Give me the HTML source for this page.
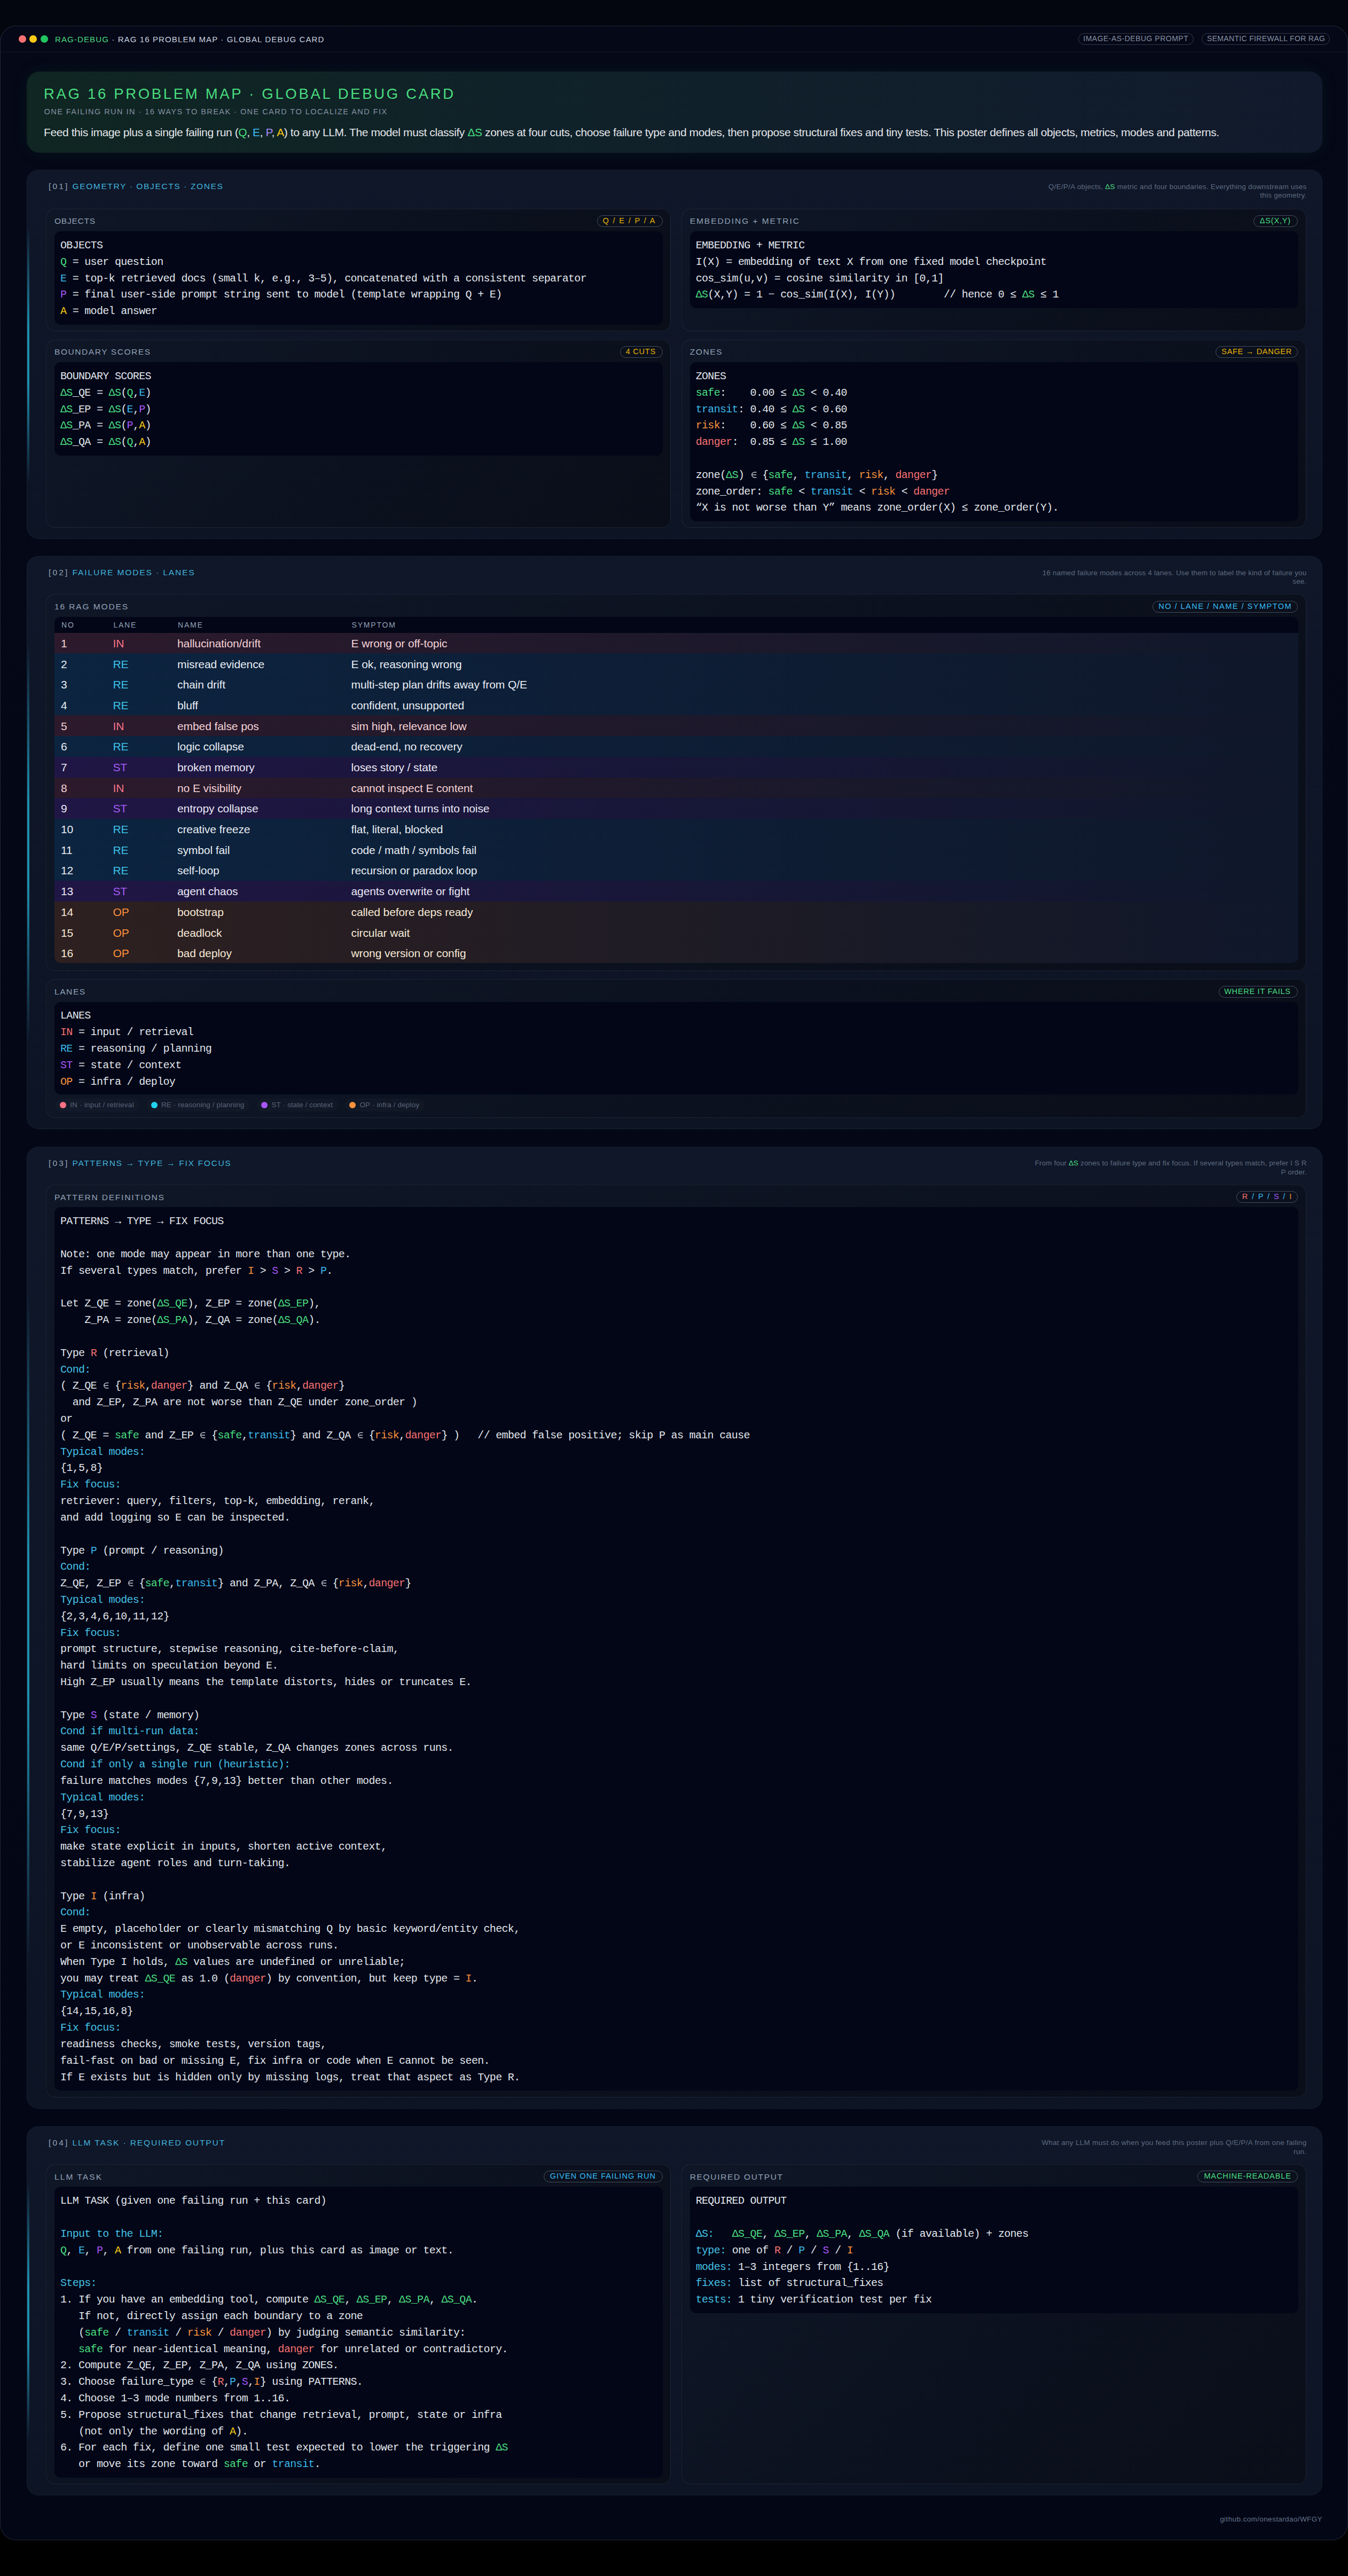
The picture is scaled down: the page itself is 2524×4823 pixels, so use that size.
<!DOCTYPE html><html><head><meta charset="utf-8"><title>RAG 16 Problem Map</title><style>
*{box-sizing:border-box;margin:0;padding:0}
html,body{width:2524px;height:4823px;overflow:hidden;background:#000}
body{position:relative;font-family:"Liberation Sans",sans-serif;color:#e5e7eb}
.abs{position:absolute;white-space:nowrap}
.bg{position:absolute;left:0;top:0;width:2524px;height:4823px;background:linear-gradient(180deg,#04060f 0px,#02030a 1500px,#000 4760px)}
.win{position:absolute;left:0;top:48px;width:2524px;height:4708px;border:1px solid rgba(148,163,184,.2);border-radius:30px;
 background:linear-gradient(180deg,#050817 0%,#040816 50%,#030615 100%);overflow:hidden}
.tbline{position:absolute;left:1px;right:1px;top:48px;height:1px;background:rgba(148,163,184,.1)}
.dot{position:absolute;width:14px;height:14px;border-radius:50%}
.tpill{position:absolute;height:22px;border:1.5px solid rgba(148,163,184,.32);border-radius:11px;color:#8591a4;font-size:14px;line-height:19px;white-space:nowrap}
.hero{position:absolute;left:50px;top:134px;width:2426px;height:152px;border-radius:24px;
 background:linear-gradient(90deg,#0f2622 0%,#10212a 45%,#111a2c 100%);
 box-shadow:0 0 36px rgba(34,197,94,.07)}
.sec{position:absolute;left:50px;width:2426px;border-radius:22px;background:linear-gradient(180deg,#0f1729 0%,#0e1527 60%,#0d1424 100%);
 border:1px solid rgba(148,163,184,.07)}
.bar{position:absolute;left:0;width:3.5px;background:linear-gradient(180deg,rgba(34,190,225,0),rgba(34,190,225,.72) 40%,rgba(34,190,225,.72) 60%,rgba(34,190,225,0))}
.sh{position:absolute;left:41px;font-size:15.5px;color:#42b4dc;white-space:nowrap;line-height:20px}
.sh i{font-style:normal;color:#94a3b8}
.cap{position:absolute;right:28.5px;text-align:right;font-size:13.5px;line-height:16.5px;color:#5f6b80;letter-spacing:0.18px;white-space:nowrap}
.pan{position:absolute;border-radius:17px;border:1px solid rgba(148,163,184,.12);background:linear-gradient(135deg,#0f1727 0%,#0b111e 55%,#090e19 100%)}
.pl{position:absolute;left:15px;font-size:15.5px;color:#94a3b8;white-space:nowrap;line-height:20px}
.tag{position:absolute;top:11.5px;height:22px;border:1.5px solid rgba(148,163,184,.42);border-radius:12px;font-size:14.5px;line-height:19px;white-space:nowrap}
.cb{position:absolute;left:15px;right:14px;top:41.5px;border-radius:12px;background:#020617;padding:11.8px 12px 9px 11px}
pre{font-family:"Liberation Mono",monospace;font-size:20px;line-height:30.82px;letter-spacing:-0.68px;color:#e2e6ec;white-space:pre}
.tbl{position:absolute;left:15px;right:14px;top:41.5px;border-radius:12px;overflow:hidden;background:#020617}
.th{position:relative;height:30.2px;font-size:14px;color:#94a3b8;letter-spacing:1.8px}
.tr{position:relative;height:38.7px;font-size:21px;letter-spacing:-0.09px}
.tc{position:absolute;white-space:nowrap}
.leg{position:absolute;height:24px;border-radius:12px;background:rgba(148,163,184,.03);font-size:13.5px;color:#5a6478;white-space:nowrap;line-height:24px}
.leg b{position:absolute;width:12px;height:12px;border-radius:50%;top:6px;left:7px}
</style></head><body>
<div class="bg"></div><div class="win"><div class="tbline"></div></div>
<div class="dot" style="left:34.5px;top:66px;background:#f87171"></div>
<div class="dot" style="left:55.0px;top:66px;background:#facc15"></div>
<div class="dot" style="left:76.0px;top:66px;background:#22c55e"></div>
<div class="abs" id="tbt" style="left:103px;top:63.50px;font-size:15px;line-height:20px;letter-spacing:1.12px;color:#cbd5e1"><span style="color:#4ade80">RAG-DEBUG</span> · RAG 16 PROBLEM MAP · GLOBAL DEBUG CARD</div>
<div class="tpill" style="left:2019.3px;top:62px;width:216.1px;padding-left:8.0px;letter-spacing:0.485px">IMAGE-AS-DEBUG PROMPT</div>
<div class="tpill" style="left:2249.6px;top:62px;width:240.8px;padding-left:9.4px;letter-spacing:0.333px">SEMANTIC FIREWALL FOR RAG</div>
<div class="hero">
<div class="abs" id="ht" style="left:32px;top:26.07px;font-size:27.5px;line-height:32px;letter-spacing:3.676px;color:#4ade80">RAG 16 PROBLEM MAP · GLOBAL DEBUG CARD</div>
<div class="abs" id="hs" style="left:32.5px;top:65.97px;font-size:14.5px;line-height:18px;letter-spacing:1.463px;color:#8591a3">ONE FAILING RUN IN · 16 WAYS TO BREAK · ONE CARD TO LOCALIZE AND FIX</div>
<div class="abs" id="hb" style="left:32px;top:101.32px;font-size:21px;line-height:26px;letter-spacing:-0.406px;color:#e5e7eb">Feed this image plus a single failing run (<span style="color:#4ade80">Q</span>, <span style="color:#38bdf8">E</span>, <span style="color:#a78bfa">P</span>, <span style="color:#facc15">A</span>) to any LLM. The model must classify <span style="color:#4ade80">ΔS</span> zones at four cuts, choose failure type and modes, then propose structural fixes and tiny tests. This poster defines all objects, metrics, modes and patterns.</div>
</div>
<div class="sec" style="top:318.0px;height:690.5px">
<div class="bar" style="top:103.6px;height:483.3px"></div>
<div class="sh" style="left:40px;top:20.13px;letter-spacing:3.133px"><i>[01]</i></div>
<div class="sh" style="left:84.5px;top:20.13px;letter-spacing:1.632px">GEOMETRY · OBJECTS · ZONES</div>
<div class="cap" style="top:22.57px;letter-spacing:0.247px">Q/E/P/A objects, <span style="color:#4ade80">ΔS</span> metric and four boundaries. Everything downstream uses<br>this geometry.</div>
<div class="pan" style="left:35.0px;top:71.7px;width:1170.2px;height:229.8px"><div class="pl" style="top:12.53px;letter-spacing:0.767px">OBJECTS</div><div class="tag" style="left:1030.7px;width:123.4px;color:#eab308;letter-spacing:1.875px;padding-left:9.8px">Q / E / P / A</div><div class="cb"><pre>OBJECTS
<span style="color:#4ade80">Q</span> = user question
<span style="color:#3cb8ea">E</span> = top-k retrieved docs (small k, e.g., 3–5), concatenated with a consistent separator
<span style="color:#a855f7">P</span> = final user-side prompt string sent to model (template wrapping Q + E)
<span style="color:#facc15">A</span> = model answer</pre></div></div><div class="pan" style="left:1224.7px;top:71.7px;width:1170.2px;height:229.8px"><div class="pl" style="top:12.53px;letter-spacing:1.959px">EMBEDDING + METRIC</div><div class="tag" style="left:1070.6px;width:83.0px;color:#4ade80;letter-spacing:0.833px;padding-left:10.5px">ΔS(X,Y)</div><div class="cb"><pre>EMBEDDING + METRIC
I(X) = embedding of text X from one fixed model checkpoint
cos_sim(u,v) = cosine similarity in [0,1]
<span style="color:#4ade80">ΔS</span>(X,Y) = 1 − cos_sim(I(X), I(Y))        // hence 0 ≤ <span style="color:#4ade80">ΔS</span> ≤ 1</pre></div></div><div class="pan" style="left:35.0px;top:316.6px;width:1170.2px;height:352.7px"><div class="pl" style="top:12.53px;letter-spacing:1.571px">BOUNDARY SCORES</div><div class="tag" style="left:1073.5px;width:80.8px;color:#eab308;letter-spacing:0.740px;padding-left:10.3px">4 CUTS</div><div class="cb"><pre>BOUNDARY SCORES
<span style="color:#4ade80">ΔS</span>_QE = <span style="color:#4ade80">ΔS</span>(<span style="color:#4ade80">Q</span>,<span style="color:#3cb8ea">E</span>)
<span style="color:#4ade80">ΔS</span>_EP = <span style="color:#4ade80">ΔS</span>(<span style="color:#3cb8ea">E</span>,<span style="color:#a855f7">P</span>)
<span style="color:#4ade80">ΔS</span>_PA = <span style="color:#4ade80">ΔS</span>(<span style="color:#a855f7">P</span>,<span style="color:#facc15">A</span>)
<span style="color:#4ade80">ΔS</span>_QA = <span style="color:#4ade80">ΔS</span>(<span style="color:#4ade80">Q</span>,<span style="color:#facc15">A</span>)</pre></div></div><div class="pan" style="left:1224.7px;top:316.6px;width:1170.2px;height:352.7px"><div class="pl" style="top:12.53px;letter-spacing:1.600px">ZONES</div><div class="tag" style="left:998.9px;width:154.3px;color:#eab308;letter-spacing:0.708px;padding-left:10.7px">SAFE → DANGER</div><div class="cb"><pre>ZONES
<span style="color:#4ade80">safe</span>:    0.00 ≤ <span style="color:#4ade80">ΔS</span> &lt; 0.40
<span style="color:#3cb8ea">transit</span>: 0.40 ≤ <span style="color:#4ade80">ΔS</span> &lt; 0.60
<span style="color:#fb923c">risk</span>:    0.60 ≤ <span style="color:#4ade80">ΔS</span> &lt; 0.85
<span style="color:#f87171">danger</span>:  0.85 ≤ <span style="color:#4ade80">ΔS</span> ≤ 1.00

zone(<span style="color:#4ade80">ΔS</span>) <svg width="11.32" height="14" viewBox="0 0 11.32 14" style="vertical-align:0;overflow:visible" fill="none" stroke="currentColor" stroke-width="1.5" opacity=".85"><path d="M11.4 3.2H7.6A4.85 4.85 0 0 0 7.6 12.9H11.4M2.8 8.05H11"/></svg> {<span style="color:#4ade80">safe</span>, <span style="color:#3cb8ea">transit</span>, <span style="color:#fb923c">risk</span>, <span style="color:#f87171">danger</span>}
zone_order: <span style="color:#4ade80">safe</span> &lt; <span style="color:#3cb8ea">transit</span> &lt; <span style="color:#fb923c">risk</span> &lt; <span style="color:#f87171">danger</span>
“X is not worse than Y” means zone_order(X) ≤ zone_order(Y).</pre></div></div>
</div>
<div class="sec" style="top:1041.0px;height:1073.0px">
<div class="bar" style="top:160.9px;height:751.1px"></div>
<div class="sh" style="left:40px;top:20.13px;letter-spacing:3.133px"><i>[02]</i></div>
<div class="sh" style="left:84.5px;top:20.13px;letter-spacing:1.885px">FAILURE MODES · LANES</div>
<div class="cap" style="top:22.57px;letter-spacing:0.181px">16 named failure modes across 4 lanes. Use them to label the kind of failure you<br>see.</div>
<div class="pan" style="left:35.0px;top:70.0px;width:2360.0px;height:705.6px"><div class="pl" style="top:12.53px;letter-spacing:1.891px">16 RAG MODES</div><div class="tag" style="left:2070.8px;width:272.0px;color:#38bdf8;letter-spacing:1.504px;padding-left:10.4px">NO / LANE / NAME / SYMPTOM</div><div class="tbl" style="height:648.8px"><div class="th"><div class="tc" style="left:13.0px;top:6.15px;line-height:18px">NO</div><div class="tc" style="left:110.4px;top:6.15px;line-height:18px">LANE</div><div class="tc" style="left:231.0px;top:6.15px;line-height:18px">NAME</div><div class="tc" style="left:556.5px;top:6.15px;line-height:18px">SYMPTOM</div></div><div class="tr" style="background:linear-gradient(90deg,#2c1a2c 0%,#0f172a 100%);color:#f6d3d6"><div class="tc" style="left:12.0px;top:8.22px;line-height:24px">1</div><div class="tc" style="left:109.4px;top:8.22px;line-height:24px;color:#f7738a">IN</div><div class="tc" style="left:230.0px;top:8.22px;line-height:24px">hallucination/drift</div><div class="tc" style="left:555.5px;top:8.22px;line-height:24px">E wrong or off-topic</div></div><div class="tr" style="background:linear-gradient(90deg,#0c2440 0%,#0f172a 100%);color:#e9eef4"><div class="tc" style="left:12.0px;top:8.22px;line-height:24px">2</div><div class="tc" style="left:109.4px;top:8.22px;line-height:24px;color:#3cc0e6">RE</div><div class="tc" style="left:230.0px;top:8.22px;line-height:24px">misread evidence</div><div class="tc" style="left:555.5px;top:8.22px;line-height:24px">E ok, reasoning wrong</div></div><div class="tr" style="background:linear-gradient(90deg,#0c2440 0%,#0f172a 100%);color:#e9eef4"><div class="tc" style="left:12.0px;top:8.22px;line-height:24px">3</div><div class="tc" style="left:109.4px;top:8.22px;line-height:24px;color:#3cc0e6">RE</div><div class="tc" style="left:230.0px;top:8.22px;line-height:24px">chain drift</div><div class="tc" style="left:555.5px;top:8.22px;line-height:24px">multi-step plan drifts away from Q/E</div></div><div class="tr" style="background:linear-gradient(90deg,#0c2440 0%,#0f172a 100%);color:#e9eef4"><div class="tc" style="left:12.0px;top:8.22px;line-height:24px">4</div><div class="tc" style="left:109.4px;top:8.22px;line-height:24px;color:#3cc0e6">RE</div><div class="tc" style="left:230.0px;top:8.22px;line-height:24px">bluff</div><div class="tc" style="left:555.5px;top:8.22px;line-height:24px">confident, unsupported</div></div><div class="tr" style="background:linear-gradient(90deg,#2c1a2c 0%,#0f172a 100%);color:#f6d3d6"><div class="tc" style="left:12.0px;top:8.22px;line-height:24px">5</div><div class="tc" style="left:109.4px;top:8.22px;line-height:24px;color:#f7738a">IN</div><div class="tc" style="left:230.0px;top:8.22px;line-height:24px">embed false pos</div><div class="tc" style="left:555.5px;top:8.22px;line-height:24px">sim high, relevance low</div></div><div class="tr" style="background:linear-gradient(90deg,#0c2440 0%,#0f172a 100%);color:#e9eef4"><div class="tc" style="left:12.0px;top:8.22px;line-height:24px">6</div><div class="tc" style="left:109.4px;top:8.22px;line-height:24px;color:#3cc0e6">RE</div><div class="tc" style="left:230.0px;top:8.22px;line-height:24px">logic collapse</div><div class="tc" style="left:555.5px;top:8.22px;line-height:24px">dead-end, no recovery</div></div><div class="tr" style="background:linear-gradient(90deg,#201645 0%,#0f172a 100%);color:#ebe9f6"><div class="tc" style="left:12.0px;top:8.22px;line-height:24px">7</div><div class="tc" style="left:109.4px;top:8.22px;line-height:24px;color:#a65cf5">ST</div><div class="tc" style="left:230.0px;top:8.22px;line-height:24px">broken memory</div><div class="tc" style="left:555.5px;top:8.22px;line-height:24px">loses story / state</div></div><div class="tr" style="background:linear-gradient(90deg,#2c1a2c 0%,#0f172a 100%);color:#f6d3d6"><div class="tc" style="left:12.0px;top:8.22px;line-height:24px">8</div><div class="tc" style="left:109.4px;top:8.22px;line-height:24px;color:#f7738a">IN</div><div class="tc" style="left:230.0px;top:8.22px;line-height:24px">no E visibility</div><div class="tc" style="left:555.5px;top:8.22px;line-height:24px">cannot inspect E content</div></div><div class="tr" style="background:linear-gradient(90deg,#201645 0%,#0f172a 100%);color:#ebe9f6"><div class="tc" style="left:12.0px;top:8.22px;line-height:24px">9</div><div class="tc" style="left:109.4px;top:8.22px;line-height:24px;color:#a65cf5">ST</div><div class="tc" style="left:230.0px;top:8.22px;line-height:24px">entropy collapse</div><div class="tc" style="left:555.5px;top:8.22px;line-height:24px">long context turns into noise</div></div><div class="tr" style="background:linear-gradient(90deg,#0c2440 0%,#0f172a 100%);color:#e9eef4"><div class="tc" style="left:12.0px;top:8.22px;line-height:24px">10</div><div class="tc" style="left:109.4px;top:8.22px;line-height:24px;color:#3cc0e6">RE</div><div class="tc" style="left:230.0px;top:8.22px;line-height:24px">creative freeze</div><div class="tc" style="left:555.5px;top:8.22px;line-height:24px">flat, literal, blocked</div></div><div class="tr" style="background:linear-gradient(90deg,#0c2440 0%,#0f172a 100%);color:#e9eef4"><div class="tc" style="left:12.0px;top:8.22px;line-height:24px">11</div><div class="tc" style="left:109.4px;top:8.22px;line-height:24px;color:#3cc0e6">RE</div><div class="tc" style="left:230.0px;top:8.22px;line-height:24px">symbol fail</div><div class="tc" style="left:555.5px;top:8.22px;line-height:24px">code / math / symbols fail</div></div><div class="tr" style="background:linear-gradient(90deg,#0c2440 0%,#0f172a 100%);color:#e9eef4"><div class="tc" style="left:12.0px;top:8.22px;line-height:24px">12</div><div class="tc" style="left:109.4px;top:8.22px;line-height:24px;color:#3cc0e6">RE</div><div class="tc" style="left:230.0px;top:8.22px;line-height:24px">self-loop</div><div class="tc" style="left:555.5px;top:8.22px;line-height:24px">recursion or paradox loop</div></div><div class="tr" style="background:linear-gradient(90deg,#201645 0%,#0f172a 100%);color:#ebe9f6"><div class="tc" style="left:12.0px;top:8.22px;line-height:24px">13</div><div class="tc" style="left:109.4px;top:8.22px;line-height:24px;color:#a65cf5">ST</div><div class="tc" style="left:230.0px;top:8.22px;line-height:24px">agent chaos</div><div class="tc" style="left:555.5px;top:8.22px;line-height:24px">agents overwrite or fight</div></div><div class="tr" style="background:linear-gradient(90deg,#2e2020 0%,#0f172a 100%);color:#f7ead6"><div class="tc" style="left:12.0px;top:8.22px;line-height:24px">14</div><div class="tc" style="left:109.4px;top:8.22px;line-height:24px;color:#fb923c">OP</div><div class="tc" style="left:230.0px;top:8.22px;line-height:24px">bootstrap</div><div class="tc" style="left:555.5px;top:8.22px;line-height:24px">called before deps ready</div></div><div class="tr" style="background:linear-gradient(90deg,#2e2020 0%,#0f172a 100%);color:#f7ead6"><div class="tc" style="left:12.0px;top:8.22px;line-height:24px">15</div><div class="tc" style="left:109.4px;top:8.22px;line-height:24px;color:#fb923c">OP</div><div class="tc" style="left:230.0px;top:8.22px;line-height:24px">deadlock</div><div class="tc" style="left:555.5px;top:8.22px;line-height:24px">circular wait</div></div><div class="tr" style="background:linear-gradient(90deg,#2e2020 0%,#0f172a 100%);color:#f7ead6"><div class="tc" style="left:12.0px;top:8.22px;line-height:24px">16</div><div class="tc" style="left:109.4px;top:8.22px;line-height:24px;color:#fb923c">OP</div><div class="tc" style="left:230.0px;top:8.22px;line-height:24px">bad deploy</div><div class="tc" style="left:555.5px;top:8.22px;line-height:24px">wrong version or config</div></div></div></div><div class="pan" style="left:35.0px;top:791.0px;width:2360.0px;height:259.6px"><div class="pl" style="top:12.53px;letter-spacing:1.575px">LANES</div><div class="tag" style="left:2194.6px;width:148.3px;color:#4ade80;letter-spacing:0.738px;padding-left:9.6px">WHERE IT FAILS</div><div class="cb" style="height:173.9px"><pre>LANES
<span style="color:#f87171">IN</span> = input / retrieval
<span style="color:#3cb8ea">RE</span> = reasoning / planning
<span style="color:#a855f7">ST</span> = state / context
<span style="color:#fb923c">OP</span> = infra / deploy</pre></div><div class="leg" style="left:16.8px;top:223.0px;padding-left:27.2px;padding-right:10px;letter-spacing:0.267px"><b style="background:#fb7185;left:8.0px"></b>IN · input / retrieval</div><div class="leg" style="left:187.6px;top:223.0px;padding-left:27.4px;padding-right:10px;letter-spacing:0.125px"><b style="background:#22d3ee;left:8.0px"></b>RE · reasoning / planning</div><div class="leg" style="left:394.0px;top:223.0px;padding-left:27.5px;padding-right:10px;letter-spacing:0.079px"><b style="background:#a855f7;left:8.0px"></b>ST · state / context</div><div class="leg" style="left:559.2px;top:223.0px;padding-left:27.2px;padding-right:10px;letter-spacing:0.178px"><b style="background:#fb923c;left:8.0px"></b>OP · infra / deploy</div></div>
</div>
<div class="sec" style="top:2146.7px;height:1801.4px">
<div class="bar" style="top:270.2px;height:1261.0px"></div>
<div class="sh" style="left:40px;top:20.13px;letter-spacing:3.133px"><i>[03]</i></div>
<div class="sh" style="left:84.5px;top:20.13px;letter-spacing:1.719px">PATTERNS → TYPE → FIX FOCUS</div>
<div class="cap" style="top:22.57px;letter-spacing:0.106px">From four <span style="color:#4ade80">ΔS</span> zones to failure type and fix focus. If several types match, prefer I S R<br>P order.</div>
<div class="pan" style="left:35.0px;top:70.3px;width:2360.0px;height:1709.4px"><div class="pl" style="top:12.53px;letter-spacing:1.794px">PATTERN DEFINITIONS</div><div class="tag" style="left:2227.7px;width:115.6px;color:#38bdf8;letter-spacing:1.875px;padding-left:10.1px"><span style="color:#f87171">R</span> / <span style="color:#38bdf8">P</span> / <span style="color:#a855f7">S</span> / <span style="color:#fb923c">I</span></div><div class="cb"><pre>PATTERNS → TYPE → FIX FOCUS

Note: one mode may appear in more than one type.
If several types match, prefer <span style="color:#fb923c">I</span> &gt; <span style="color:#a855f7">S</span> &gt; <span style="color:#f87171">R</span> &gt; <span style="color:#3cb8ea">P</span>.

Let Z_QE = zone(<span style="color:#4ade80">ΔS_QE</span>), Z_EP = zone(<span style="color:#4ade80">ΔS_EP</span>),
    Z_PA = zone(<span style="color:#4ade80">ΔS_PA</span>), Z_QA = zone(<span style="color:#4ade80">ΔS_QA</span>).

Type <span style="color:#f87171">R</span> (retrieval)
<span style="color:#45c2e6">Cond:</span>
( Z_QE <svg width="11.32" height="14" viewBox="0 0 11.32 14" style="vertical-align:0;overflow:visible" fill="none" stroke="currentColor" stroke-width="1.5" opacity=".85"><path d="M11.4 3.2H7.6A4.85 4.85 0 0 0 7.6 12.9H11.4M2.8 8.05H11"/></svg> {<span style="color:#fb923c">risk</span>,<span style="color:#f87171">danger</span>} and Z_QA <svg width="11.32" height="14" viewBox="0 0 11.32 14" style="vertical-align:0;overflow:visible" fill="none" stroke="currentColor" stroke-width="1.5" opacity=".85"><path d="M11.4 3.2H7.6A4.85 4.85 0 0 0 7.6 12.9H11.4M2.8 8.05H11"/></svg> {<span style="color:#fb923c">risk</span>,<span style="color:#f87171">danger</span>}
  and Z_EP, Z_PA are not worse than Z_QE under zone_order )
or
( Z_QE = <span style="color:#4ade80">safe</span> and Z_EP <svg width="11.32" height="14" viewBox="0 0 11.32 14" style="vertical-align:0;overflow:visible" fill="none" stroke="currentColor" stroke-width="1.5" opacity=".85"><path d="M11.4 3.2H7.6A4.85 4.85 0 0 0 7.6 12.9H11.4M2.8 8.05H11"/></svg> {<span style="color:#4ade80">safe</span>,<span style="color:#3cb8ea">transit</span>} and Z_QA <svg width="11.32" height="14" viewBox="0 0 11.32 14" style="vertical-align:0;overflow:visible" fill="none" stroke="currentColor" stroke-width="1.5" opacity=".85"><path d="M11.4 3.2H7.6A4.85 4.85 0 0 0 7.6 12.9H11.4M2.8 8.05H11"/></svg> {<span style="color:#fb923c">risk</span>,<span style="color:#f87171">danger</span>} )   // embed false positive; skip P as main cause
<span style="color:#45c2e6">Typical modes:</span>
{1,5,8}
<span style="color:#45c2e6">Fix focus:</span>
retriever: query, filters, top-k, embedding, rerank,
and add logging so E can be inspected.

Type <span style="color:#3cb8ea">P</span> (prompt / reasoning)
<span style="color:#45c2e6">Cond:</span>
Z_QE, Z_EP <svg width="11.32" height="14" viewBox="0 0 11.32 14" style="vertical-align:0;overflow:visible" fill="none" stroke="currentColor" stroke-width="1.5" opacity=".85"><path d="M11.4 3.2H7.6A4.85 4.85 0 0 0 7.6 12.9H11.4M2.8 8.05H11"/></svg> {<span style="color:#4ade80">safe</span>,<span style="color:#3cb8ea">transit</span>} and Z_PA, Z_QA <svg width="11.32" height="14" viewBox="0 0 11.32 14" style="vertical-align:0;overflow:visible" fill="none" stroke="currentColor" stroke-width="1.5" opacity=".85"><path d="M11.4 3.2H7.6A4.85 4.85 0 0 0 7.6 12.9H11.4M2.8 8.05H11"/></svg> {<span style="color:#fb923c">risk</span>,<span style="color:#f87171">danger</span>}
<span style="color:#45c2e6">Typical modes:</span>
{2,3,4,6,10,11,12}
<span style="color:#45c2e6">Fix focus:</span>
prompt structure, stepwise reasoning, cite-before-claim,
hard limits on speculation beyond E.
High Z_EP usually means the template distorts, hides or truncates E.

Type <span style="color:#a855f7">S</span> (state / memory)
<span style="color:#45c2e6">Cond if multi-run data:</span>
same Q/E/P/settings, Z_QE stable, Z_QA changes zones across runs.
<span style="color:#45c2e6">Cond if only a single run (heuristic):</span>
failure matches modes {7,9,13} better than other modes.
<span style="color:#45c2e6">Typical modes:</span>
{7,9,13}
<span style="color:#45c2e6">Fix focus:</span>
make state explicit in inputs, shorten active context,
stabilize agent roles and turn-taking.

Type <span style="color:#fb923c">I</span> (infra)
<span style="color:#45c2e6">Cond:</span>
E empty, placeholder or clearly mismatching Q by basic keyword/entity check,
or E inconsistent or unobservable across runs.
When Type I holds, <span style="color:#4ade80">ΔS</span> values are undefined or unreliable;
you may treat <span style="color:#4ade80">ΔS_QE</span> as 1.0 (<span style="color:#f87171">danger</span>) by convention, but keep type = <span style="color:#fb923c">I</span>.
<span style="color:#45c2e6">Typical modes:</span>
{14,15,16,8}
<span style="color:#45c2e6">Fix focus:</span>
readiness checks, smoke tests, version tags,
fail-fast on bad or missing E, fix infra or code when E cannot be seen.
If E exists but is hidden only by missing logs, treat that aspect as Type R.</pre></div></div>
</div>
<div class="sec" style="top:3980.8px;height:691.2px">
<div class="bar" style="top:103.7px;height:483.8px"></div>
<div class="sh" style="left:40px;top:20.13px;letter-spacing:3.133px"><i>[04]</i></div>
<div class="sh" style="left:84.5px;top:20.13px;letter-spacing:1.900px">LLM TASK · REQUIRED OUTPUT</div>
<div class="cap" style="top:22.57px;letter-spacing:0.307px">What any LLM must do when you feed this poster plus Q/E/P/A from one failing<br>run.</div>
<div class="pan" style="left:35.0px;top:70.2px;width:1170.2px;height:598.6px"><div class="pl" style="top:12.53px;letter-spacing:2.071px">LLM TASK</div><div class="tag" style="left:930.6px;width:223.2px;color:#38bdf8;letter-spacing:1.085px;padding-left:11.1px">GIVEN ONE FAILING RUN</div><div class="cb"><pre>LLM TASK (given one failing run + this card)

<span style="color:#45c2e6">Input to the LLM:</span>
<span style="color:#4ade80">Q</span>, <span style="color:#3cb8ea">E</span>, <span style="color:#a855f7">P</span>, <span style="color:#facc15">A</span> from one failing run, plus this card as image or text.

<span style="color:#45c2e6">Steps:</span>
1. If you have an embedding tool, compute <span style="color:#4ade80">ΔS_QE</span>, <span style="color:#4ade80">ΔS_EP</span>, <span style="color:#4ade80">ΔS_PA</span>, <span style="color:#4ade80">ΔS_QA</span>.
   If not, directly assign each boundary to a zone
   (<span style="color:#4ade80">safe</span> / <span style="color:#3cb8ea">transit</span> / <span style="color:#fb923c">risk</span> / <span style="color:#f87171">danger</span>) by judging semantic similarity:
   <span style="color:#4ade80">safe</span> for near-identical meaning, <span style="color:#f87171">danger</span> for unrelated or contradictory.
2. Compute Z_QE, Z_EP, Z_PA, Z_QA using ZONES.
3. Choose failure_type <svg width="11.32" height="14" viewBox="0 0 11.32 14" style="vertical-align:0;overflow:visible" fill="none" stroke="currentColor" stroke-width="1.5" opacity=".85"><path d="M11.4 3.2H7.6A4.85 4.85 0 0 0 7.6 12.9H11.4M2.8 8.05H11"/></svg> {<span style="color:#f87171">R</span>,<span style="color:#3cb8ea">P</span>,<span style="color:#a855f7">S</span>,<span style="color:#fb923c">I</span>} using PATTERNS.
4. Choose 1–3 mode numbers from 1..16.
5. Propose structural_fixes that change retrieval, prompt, state or infra
   (not only the wording of <span style="color:#facc15">A</span>).
6. For each fix, define one small test expected to lower the triggering <span style="color:#4ade80">ΔS</span>
   or move its zone toward <span style="color:#4ade80">safe</span> or <span style="color:#3cb8ea">transit</span>.</pre></div></div><div class="pan" style="left:1224.7px;top:70.2px;width:1170.2px;height:598.6px"><div class="pl" style="top:12.53px;letter-spacing:1.679px">REQUIRED OUTPUT</div><div class="tag" style="left:965.7px;width:187.5px;color:#4ade80;letter-spacing:0.893px;padding-left:11.0px">MACHINE-READABLE</div><div class="cb"><pre>REQUIRED OUTPUT

<span style="color:#45c2e6">ΔS:</span>   <span style="color:#4ade80">ΔS_QE</span>, <span style="color:#4ade80">ΔS_EP</span>, <span style="color:#4ade80">ΔS_PA</span>, <span style="color:#4ade80">ΔS_QA</span> (if available) + zones
<span style="color:#45c2e6">type:</span> one of <span style="color:#f87171">R</span> / <span style="color:#3cb8ea">P</span> / <span style="color:#a855f7">S</span> / <span style="color:#fb923c">I</span>
<span style="color:#45c2e6">modes:</span> 1–3 integers from {1..16}
<span style="color:#45c2e6">fixes:</span> list of structural_fixes
<span style="color:#45c2e6">tests:</span> 1 tiny verification test per fix</pre></div></div>
</div>
<div class="abs" id="foot" style="right:48px;top:4709.02px;font-size:13.5px;line-height:16px;letter-spacing:0.392px;color:#64748b">github.com/onestardao/WFGY</div>
</body></html>
